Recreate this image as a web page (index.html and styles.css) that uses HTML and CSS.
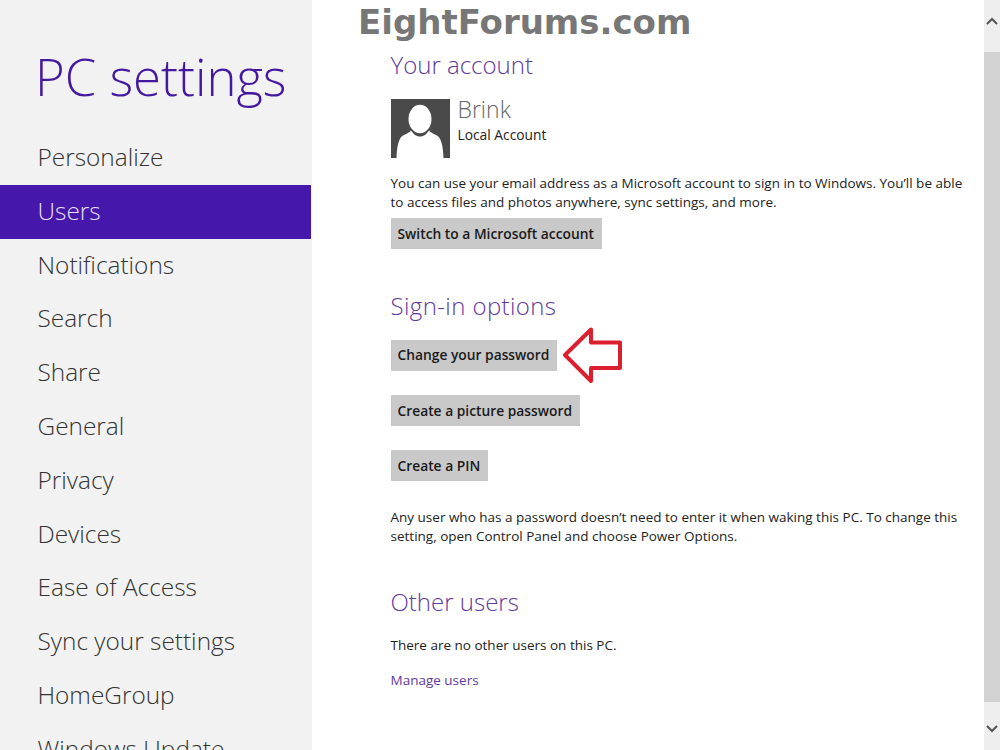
FILE: index.html
```html
<!DOCTYPE html>
<html lang="en">
<head>
<meta charset="utf-8">
<title>PC settings</title>
<link rel="stylesheet" href="styles.css">
</head>
<body>
<div class="screen">
  <aside class="sidebar">
    <h1 class="title">PC settings</h1>
    <nav class="nav">
      <div class="nav-item">Personalize</div>
      <div class="nav-item active">Users</div>
      <div class="nav-item">Notifications</div>
      <div class="nav-item">Search</div>
      <div class="nav-item">Share</div>
      <div class="nav-item">General</div>
      <div class="nav-item">Privacy</div>
      <div class="nav-item">Devices</div>
      <div class="nav-item">Ease of Access</div>
      <div class="nav-item">Sync your settings</div>
      <div class="nav-item">HomeGroup</div>
      <div class="nav-item">Windows Update</div>
    </nav>
  </aside>
  <main class="content">
    <h2 class="heading first">Your account</h2>
    <div class="account">
      <svg class="avatar" viewBox="0 0 59 59" width="59" height="59"><rect width="59" height="59" fill="#4a4a4a"/><ellipse cx="29" cy="20" rx="11.500" ry="14.300" fill="#fff"/><path fill="#fff" d="M5.500 59C6 46 8 38 13 36c3-1.500 6-3 7-4.500 3 4.500 6 6 9 6s6-1.500 9-6c1 1.500 4 3 7 4.500 5 2 7 10 7.500 23z"/></svg>
      <div class="account-text">
        <div class="account-name">Brink</div>
        <div class="account-type">Local Account</div>
      </div>
    </div>
    <p class="text intro">You can use your email address as a Microsoft account to sign in to Windows. You’ll be able to access files and photos anywhere, sync settings, and more.</p>
    <div class="btn">Switch to a Microsoft account</div>
    <h2 class="heading signin">Sign-in options</h2>
    <div class="btn-row">
      <div class="btn">Change your password</div>
      <svg class="arrow" viewBox="0 0 62 62" width="62" height="62"><path fill="#fff" stroke="#dc1f2e" stroke-width="4" stroke-linejoin="round" d="M4 30 30 4.500v13h29V43H30v13z"/></svg>
    </div>
    <div class="btn">Create a picture password</div>
    <div class="btn">Create a PIN</div>
    <p class="text note">Any user who has a password doesn’t need to enter it when waking this PC. To change this setting, open Control Panel and choose Power Options.</p>
    <h2 class="heading other">Other users</h2>
    <p class="text none">There are no other users on this PC.</p>
    <div class="link">Manage users</div>
  </main>
  <div class="scrollbar">
    <div class="scroll-btn"><svg viewBox="0 0 12 8" width="12" height="8"><path d="M1 7l5-5 5 5" fill="none" stroke="#555" stroke-width="2"/></svg></div>
    <div class="scroll-thumb"></div>
    <div class="scroll-btn down"><svg viewBox="0 0 12 8" width="12" height="8"><path d="M1 1l5 5 5-5" fill="none" stroke="#555" stroke-width="2"/></svg></div>
  </div>
  <div class="watermark">EightForums.com</div>
</div>
</body>
</html>
```
FILE: styles.css
```css
* { box-sizing: border-box; }
html, body { margin: 0; padding: 0; }
body { background: #fff; font-family: "Open Sans", "Liberation Sans", sans-serif; }
.screen { position: relative; display: flex; width: 1000px; height: 750px; overflow: hidden; }
.sidebar { flex: 0 0 312px; height: 750px; background: #f2f2f2; overflow: hidden; }
.title { margin: 0; padding: 39px 0 0 35px; height: 130px; font-size: 50.800px; line-height: 76px; font-weight: 300; color: #45199f; white-space: nowrap; }
.nav { display: flex; flex-direction: column; margin-top: 1px; }
.nav-item { flex: 0 0 53.800px; height: 53.800px; padding-left: 37.500px; font-size: 24.400px; line-height: 51px; font-weight: 300; color: #333; white-space: nowrap; }
.nav-item.active { background: #4617ab; color: #e9dff7; margin-right: 1px; }
.content { flex: 1; padding: 0 0 0 78.500px; min-width: 0; color: #222; }
.heading { margin: 0; font-size: 24px; line-height: 34px; font-weight: 300; color: #5f3a9f; }
.heading.first { padding-top: 48px; }
.account { display: flex; gap: 8px; margin-top: 17px; height: 59px; }
.avatar { display: block; flex: none; }
.account-text { display: flex; flex-direction: column; }
.account-name { font-size: 23px; line-height: 24px; font-weight: 300; color: #666; margin-top: -2px; }
.account-type { font-size: 13.800px; line-height: 18px; color: #222; margin-top: 5px; }
.text { margin: 0; font-size: 13.500px; line-height: 19px; color: #222; width: 580px; }
.intro { margin-top: 16px; }
.btn { width: max-content; height: 31px; padding: 0 8px 0 7px; background: #c9c9c9; font-size: 13.800px; line-height: 31px; font-weight: 600; color: #1a1a1a; margin-top: 24px; }
.intro + .btn { margin-top: 6px; }
.signin { margin-top: 40px; letter-spacing: 0.400px; }
.signin + .btn-row { margin-top: 17px; }
.btn-row { display: flex; align-items: center; gap: 4px; height: 31px; }
.btn-row .btn { margin-top: 0; line-height: 30px; }
.arrow { flex: none; display: block; }
.note { margin-top: 27px; }
.other { margin-top: 39px; }
.none { margin-top: 17px; }
.link { margin-top: 15px; font-size: 13.500px; line-height: 20px; color: #5f3a9f; }
.scrollbar { position: absolute; top: 0; right: 0; width: 16px; height: 750px; background: #eee; display: flex; flex-direction: column; }
.scroll-btn { height: 52px; flex: none; display: flex; justify-content: center; padding-top: 17px; }
.scroll-btn svg { display: block; }
.scroll-thumb { flex: none; height: 650px; background: #d2d2d2; }
.scroll-btn.down { height: 48px; padding-top: 23px; }
.watermark { position: absolute; top: 2px; left: 358px; font-family: "DejaVu Sans", sans-serif; font-weight: 700; font-size: 34px; line-height: 40px; color: #777; white-space: nowrap; }
```
